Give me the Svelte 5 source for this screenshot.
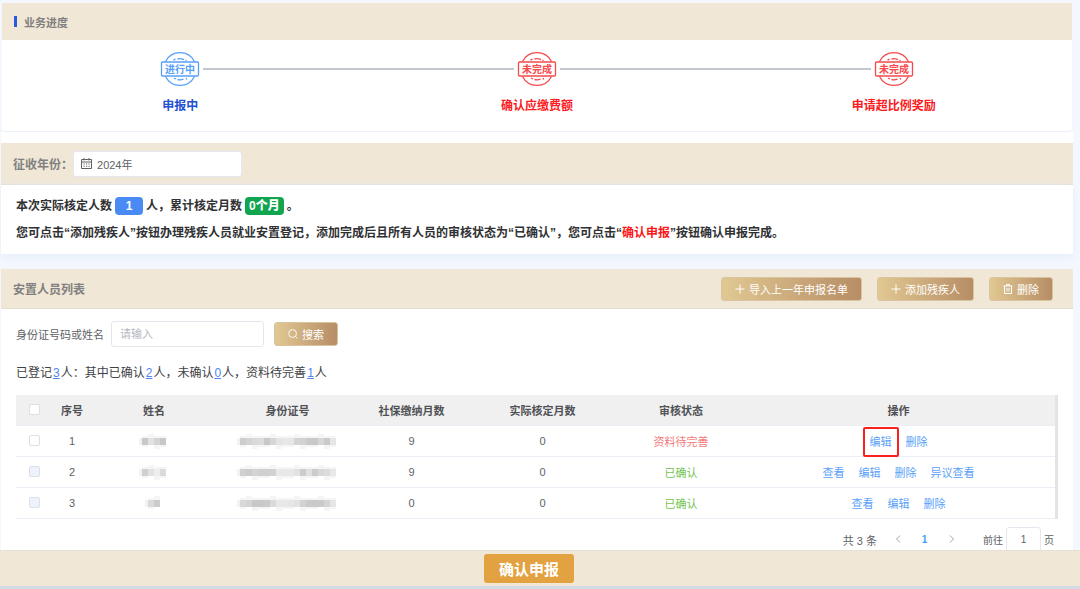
<script>
  let year = $state("2024年");
  let keyword = $state("");
  let page = $state("1");

  const steps = [
    { stamp: "进行中", label: "申报中", active: true },
    { stamp: "未完成", label: "确认应缴费额", active: false },
    { stamp: "未完成", label: "申请超比例奖励", active: false },
  ];

  // name / idNo are masked, each number is the grey level of one block
  const rows = [
    {
      name: [200, 226, 212, 200],
      idNo: [206, 212, 218, 220, 200, 214, 228, 232, 230, 212, 210, 202, 200, 214, 202, 230],
      paid: 9,
      checked: 0,
      status: "资料待完善",
      done: false,
      actions: ["编辑", "删除"],
      locked: false,
    },
    {
      name: [208, 226, 238, 218],
      idNo: [208, 204, 212, 208, 208, 210, 232, 232, 232, 226, 204, 224, 204, 216, 220, 232],
      paid: 9,
      checked: 0,
      status: "已确认",
      done: true,
      actions: ["查看", "编辑", "删除", "异议查看"],
      locked: true,
    },
    {
      name: [218, 204],
      idNo: [216, 212, 200, 200, 202, 218, 232, 232, 230, 226, 210, 202, 200, 202, 212, 230],
      paid: 0,
      checked: 0,
      status: "已确认",
      done: true,
      actions: ["查看", "编辑", "删除"],
      locked: true,
    },
  ];
</script>

{#snippet mosaic(cells)}
  <svg class="mosaic" width={cells.length * 6 + 6} height="18" aria-hidden="true">
    {#each cells as c, i}
      <rect x={i * 6 + 3} y={i % 4 === 1 ? 2 : 4} width="6" height={i % 4 === 2 ? 13 : 11} fill="#f5f5f5" />
      <rect x={i * 6 + 3} y="6" width="6" height="7" fill="rgb({c},{c},{c})" />
    {/each}
    <rect x="0" y="6" width="3" height="7" fill="#f4f2f0" />
  </svg>
{/snippet}

{#snippet plus()}
  <svg width="10" height="10" viewBox="0 0 10 10"><path d="M5 .5v9M.5 5h9" /></svg>
{/snippet}

<div class="page">
  <section class="progress">
    <h2 class="bar title"><span class="mark"></span>业务进度</h2>
    <ol class="steps">
      {#each steps as s}
        <li class:active={s.active}>
          <svg class="stamp" width="40" height="36" viewBox="0 0 40 36">
            <path d="M5.5 10.5A16.3 16.3 0 0 1 34.5 10.5M5.5 25.5A16.3 16.3 0 0 0 34.5 25.5" />
            <path d="M13.5 9.2l2-1M17.5 8q3-.8 6.500 .6M25.500 9l1 .7M14 27l2 1M17.500 28.500q3 .8 6-.3M26 27l.8 1.500" />
            <rect x="1.500" y="11" width="37" height="14" rx="1" />
            <text x="20" y="22">{s.stamp}</text>
          </svg>
          <span>{s.label}</span>
        </li>
      {/each}
    </ol>
  </section>

  <div class="bar year">
    <label for="year">征收年份：</label>
    <div class="field date">
      <svg width="11" height="11" viewBox="0 0 11 11">
        <path d="M.5 1.500h10v9H.5zM.5 4h10M3 0v2.500M8 0v2.500M2.500 6h1.200M5 6h1.200M7.500 6h1.200M2.500 8.300h1.200M5 8.300h1.200M7.500 8.300h1.200" />
      </svg>
      <input id="year" bind:value={year} />
    </div>
  </div>

  <section class="info">
    <p>
      本次实际核定人数<b class="tag blue">1</b>人，累计核定月数<b class="tag green">0个月</b>。
    </p>
    <p>
      您可点击“添加残疾人”按钮办理残疾人员就业安置登记，添加完成后且所有人员的审核状态为“已确认”，您可点击“<em>确认申报</em>”按钮确认申报完成。
    </p>
  </section>

  <section class="list">
    <div class="bar">
      <h2>安置人员列表</h2>
      <div class="tools">
        <button class="gold">{@render plus()}导入上一年申报名单</button>
        <button class="gold">{@render plus()}添加残疾人</button>
        <button class="gold">
          <svg width="10" height="10" viewBox="0 0 10 10">
            <path d="M.5 2h9M3.500 2V.5h3V2M1.500 2v7.500h7V2M4 4v3.500M6 4v3.500" />
          </svg>删除
        </button>
      </div>
    </div>

    <div class="content">
      <form class="search" onsubmit={(e) => e.preventDefault()}>
        <label for="keyword">身份证号码或姓名</label>
        <input id="keyword" class="field" placeholder="请输入" bind:value={keyword} />
        <button class="gold">
          <svg width="10" height="10" viewBox="0 0 11 11">
            <circle cx="5" cy="5" r="4.300" /><path d="M8 8l2.300 2.300" />
          </svg>搜索
        </button>
      </form>

      <p class="summary">
        已登记<a href="#all">3</a>人：其中已确认<a href="#done">2</a>人，未确认<a href="#todo">0</a>人，资料待完善<a href="#missing">1</a>人
      </p>

      <table>
        <colgroup>
          <col class="c-check" /><col class="c-no" /><col class="c-name" /><col class="c-id" />
          <col class="c-paid" /><col class="c-checked" /><col class="c-status" /><col />
        </colgroup>
        <thead>
          <tr>
            <th><input type="checkbox" aria-label="全选" /></th>
            <th>序号</th>
            <th>姓名</th>
            <th>身份证号</th>
            <th>社保缴纳月数</th>
            <th>实际核定月数</th>
            <th>审核状态</th>
            <th>操作</th>
          </tr>
        </thead>
        <tbody>
          {#each rows as r, i}
            <tr>
              <td><input type="checkbox" disabled={r.locked} aria-label="选择" /></td>
              <td>{i + 1}</td>
              <td>{@render mosaic(r.name)}</td>
              <td>{@render mosaic(r.idNo)}</td>
              <td>{r.paid}</td>
              <td>{r.checked}</td>
              <td class={r.done ? "ok" : "warn"}>{r.status}</td>
              <td>
                <div class="actions">
                  {#each r.actions as a, j}
                    <a href="#row" class:boxed={i === 0 && j === 0}>{a}</a>
                  {/each}
                </div>
              </td>
            </tr>
          {/each}
        </tbody>
      </table>

      <nav class="pager">
        <span class="total">共 3 条</span>
        <button aria-label="上一页"><svg width="6" height="8" viewBox="0 0 6 8"><path d="M5 .5L1.500 4L5 7.500" /></svg></button>
        <button class="current">1</button>
        <button aria-label="下一页"><svg width="6" height="8" viewBox="0 0 6 8"><path d="M1 .5L4.500 4L1 7.500" /></svg></button>
        <label for="page">前往</label>
        <input id="page" class="field" bind:value={page} />
        <span>页</span>
      </nav>
    </div>
  </section>
</div>

<footer>
  <button class="submit">确认申报</button>
</footer>

<style>
  :global(body) {
    background: #f4f8fe;
  }

  .page,
  footer {
    font-family: "Liberation Sans", "Noto Sans CJK SC", sans-serif;
    font-size: 11px;
    color: #606266;
  }

  .page {
    padding: 3px 7px 36px 1px;
  }

  .page * {
    box-sizing: border-box;
  }

  h2,
  p,
  ol {
    margin: 0;
    padding: 0;
  }

  svg {
    fill: none;
    stroke: currentColor;
    flex: none;
  }

  input,
  button {
    font: inherit;
    color: inherit;
  }

  .bar {
    display: flex;
    align-items: center;
    height: 40px;
    padding: 0 20px 0 12px;
    background: #f0e7d6;
    border-bottom: 1px solid #e4dfd4;
    color: #808080;
    font-weight: bold;
  }

  .bar h2 {
    font-size: 12px;
  }

  .progress {
    height: 129px;
    margin: 0 1px;
    background: #fff;
    border-bottom: 1px solid #ebf1f8;
    border-radius: 4px;
  }

  .title {
    height: 37px;
    font-size: 11px;
    border-bottom: 0;
  }

  .mark {
    width: 3px;
    height: 11px;
    margin-right: 7px;
    background: #2a5bdc;
  }

  .steps {
    display: flex;
    list-style: none;
    padding-top: 11px;
  }

  .steps li {
    position: relative;
    flex: 1;
    display: flex;
    flex-direction: column;
    align-items: center;
    gap: 10px;
    color: #fb1a1e;
    font-size: 12px;
    line-height: 18px;
    font-weight: bold;
  }

  .steps li + li::before {
    content: "";
    position: absolute;
    top: 17px;
    left: calc(-50% + 23px);
    right: calc(50% + 23px);
    height: 2px;
    background: #c4c8d0;
  }

  .steps .active {
    color: #2350d2;
  }

  .stamp {
    color: #f54a4c;
    stroke-width: 1.3;
  }

  .active .stamp {
    color: #56a0f8;
  }

  .stamp text {
    fill: currentColor;
    stroke: none;
    font-size: 10px;
    text-anchor: middle;
  }

  .year {
    height: 42px;
    box-shadow: 0 -11px #fff;
    margin-top: 11px;
    font-size: 12px;
  }

  .field {
    background: #fff;
    border: 1px solid #e4e7ed;
    border-radius: 3px;
    outline: none;
  }

  .date {
    display: flex;
    align-items: center;
    gap: 5px;
    width: 169px;
    height: 26px;
    padding: 0 7px;
    font-size: 11px;
    font-weight: normal;
    color: #606266;
  }

  .date input {
    flex: 1;
    min-width: 0;
    padding: 0;
    border: 0;
    outline: none;
  }

  .info {
    height: 69px;
    padding: 8px 15px;
    background: #fff;
    box-shadow: 0 3px 10px #e6edf9;
    color: #303133;
    font-size: 12px;
    line-height: 27px;
    font-weight: bold;
  }

  .info em {
    font-style: normal;
    color: #fd1414;
  }

  .tag {
    display: inline-block;
    height: 18px;
    margin: 0 3px;
    padding: 0 4px;
    border-radius: 4px;
    line-height: 18px;
    text-align: center;
    color: #fff;
  }

  .blue {
    width: 28px;
    background: #4a8af4;
  }

  .green {
    background: #12a550;
  }

  .list {
    position: relative;
    margin-top: 15px;
    background: #fff;
  }

  .tools {
    display: flex;
    gap: 15px;
    margin-left: auto;
  }

  .gold {
    display: flex;
    align-items: center;
    gap: 4px;
    height: 24px;
    padding: 0 13px;
    border: 1px solid #d9c4a0;
    border-radius: 3px;
    background: linear-gradient(90deg, #e1c892, #b78d66);
    color: #fff;
    font-weight: normal;
  }

  .content {
    padding: 12px 15px 0;
  }

  .search {
    display: flex;
    align-items: center;
    height: 26px;
  }

  .search .field {
    width: 153px;
    height: 26px;
    margin: 0 10px 0 7px;
    padding: 0 8px;
  }

  .search .field::placeholder {
    color: #b4b8c0;
  }

  .summary {
    padding: 16px 0 12px;
    font-size: 12px;
    line-height: 20px;
    color: #404245;
  }

  .summary a {
    margin: 0 1px;
    color: #5084ee;
  }

  table {
    width: 100%;
    table-layout: fixed;
    border-collapse: collapse;
    border-right: 3px solid #e4e4e4;
  }

  .c-check {
    width: 37px;
  }

  .c-no {
    width: 38px;
  }

  .c-name {
    width: 126px;
  }

  .c-id {
    width: 141px;
  }

  .c-paid {
    width: 107px;
  }

  .c-checked {
    width: 155px;
  }

  .c-status {
    width: 122px;
  }

  th,
  td {
    height: 31px;
    padding: 0;
    border-bottom: 1px solid #ebeef5;
    text-align: center;
  }

  th {
    height: 30px;
    background: #f0f0f0;
    color: #505255;
  }

  input[type="checkbox"] {
    display: block;
    appearance: none;
    width: 11px;
    height: 11px;
    margin: 0 auto;
    border: 1px solid #dcdfe6;
    border-radius: 2px;
    background: #fff;
  }

  input[type="checkbox"]:disabled {
    background: #edf2fc;
  }

  .mosaic {
    display: block;
    margin: 0 auto;
    stroke: none;
  }

  .warn {
    color: #f27b7b;
  }

  .ok {
    color: #74c450;
  }

  .actions {
    display: flex;
    justify-content: center;
    gap: 14px;
  }

  .actions a {
    position: relative;
    color: #5a9ff8;
    text-decoration: none;
  }

  .boxed::after {
    content: "";
    position: absolute;
    inset: -6px -7px -8px;
    border: 2px solid #fa2020;
    border-radius: 2px;
  }

  .pager {
    display: flex;
    align-items: center;
    justify-content: flex-end;
    height: 24px;
    margin-top: 9px;
    padding-right: 4px;
    font-size: 10px;
  }

  .total {
    margin-right: 7px;
    font-size: 11px;
  }

  .pager button {
    width: 27px;
    padding: 0;
    border: 0;
    background: none;
    color: #a0a4ac;
  }

  .pager .current {
    color: #409eff;
    font-weight: bold;
  }

  .pager label {
    margin-left: 18px;
  }

  .pager .field {
    width: 35px;
    height: 25px;
    margin: 0 3px;
    padding: 0;
    text-align: center;
  }

  footer {
    position: fixed;
    left: 0;
    right: 0;
    bottom: 0;
    display: flex;
    justify-content: center;
    padding: 3px 22px 3px 0;
    background: #f0e7d6;
    border-top: 1px solid #e4e0d6;
    border-bottom: 3px solid #d3dbe5;
  }

  .submit {
    width: 90px;
    height: 29px;
    padding: 0;
    border: 0;
    border-radius: 3px;
    background: #e3a241;
    color: #fff;
    font-size: 15px;
    font-weight: bold;
  }
</style>
